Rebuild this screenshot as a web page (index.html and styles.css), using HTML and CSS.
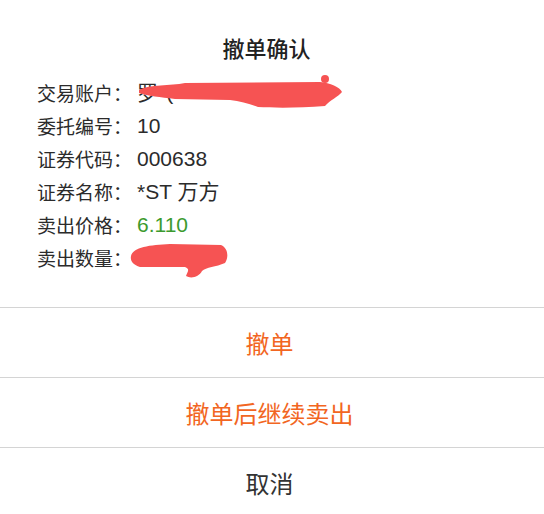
FILE: index.html
```html
<!DOCTYPE html>
<html lang="zh-CN">
<head>
<meta charset="utf-8">
<title>撤单确认</title>
<link rel="stylesheet" href="styles.css">
</head>
<body>
<div class="dialog">
  <div class="title">撤单确认</div>
  <div class="info">
    <div class="row"><span class="label">交易账户：</span><span class="value">罗*(</span></div>
    <div class="row"><span class="label">委托编号：</span><span class="value">10</span></div>
    <div class="row"><span class="label">证券代码：</span><span class="value">000638</span></div>
    <div class="row"><span class="label">证券名称：</span><span class="value">*ST 万方</span></div>
    <div class="row"><span class="label">卖出价格：</span><span class="value green">6.110</span></div>
    <div class="row"><span class="label">卖出数量：</span><span class="value"></span></div>
  </div>
  <div class="actions">
    <div class="btn orange">撤单</div>
    <div class="btn orange">撤单后继续卖出</div>
    <div class="btn gray">取消</div>
  </div>
  <svg class="redact" width="544" height="514" viewBox="0 0 544 514">
    <path d="M139,90 C150,84 170,86 185,83 L320,82 C330,83 340,87 342,92 C338,97 330,100 325,106 C300,108 275,108 258,107 C250,104 240,101 230,100 L175,99 C160,97 148,96 139,93 Z" fill="#f65353"/>
    <circle cx="325" cy="79" r="4" fill="#f65353"/>
    <path d="M131,256 C133,247 150,245 170,244 L221,245 C228,248 229,257 225,263 C216,267 206,267 202,271 C199,277 191,279 186,276 C188,271 190,269 185,267 L140,267 C133,265 130,261 131,256 Z" fill="#f65353"/>
  </svg>
</div>
</body>
</html>
```

FILE: styles.css
```css
html, body {
  margin: 0;
  padding: 0;
  background: #ffffff;
}
body {
  font-family: "Noto Sans CJK SC", "Noto Sans", sans-serif;
  color: #2b2b2b;
}
.dialog {
  position: relative;
  width: 544px;
  height: 514px;
  overflow: hidden;
  display: flex;
  flex-direction: column;
}
.title {
  margin-top: 32px;
  height: 30px;
  line-height: 30px;
  font-size: 22px;
  font-weight: 500;
  text-align: center;
  color: #222;
  padding-left: 0;
  padding-right: 11px;
}
.info {
  margin-top: 14px;
  padding-left: 37px;
  display: flex;
  flex-direction: column;
}
.row {
  display: flex;
  height: 33px;
  line-height: 33px;
  font-size: 19px;
}
.label {
  width: 100px;
  white-space: nowrap;
}
.value {
  font-size: 21px;
  font-family: "Liberation Sans", "Noto Sans CJK SC", sans-serif;
}
.green {
  color: #3c9a2e;
}
.actions {
  margin-top: 33px;
  display: flex;
  flex-direction: column;
}
.btn {
  height: 69px;
  line-height: 69px;
  border-top: 1px solid #d4d4d4;
  text-align: center;
  font-size: 24px;
  padding-right: 5px;
}
.orange {
  color: #f26622;
}
.gray {
  color: #333;
}
.redact {
  position: absolute;
  left: 0;
  top: 0;
  pointer-events: none;
}
```
